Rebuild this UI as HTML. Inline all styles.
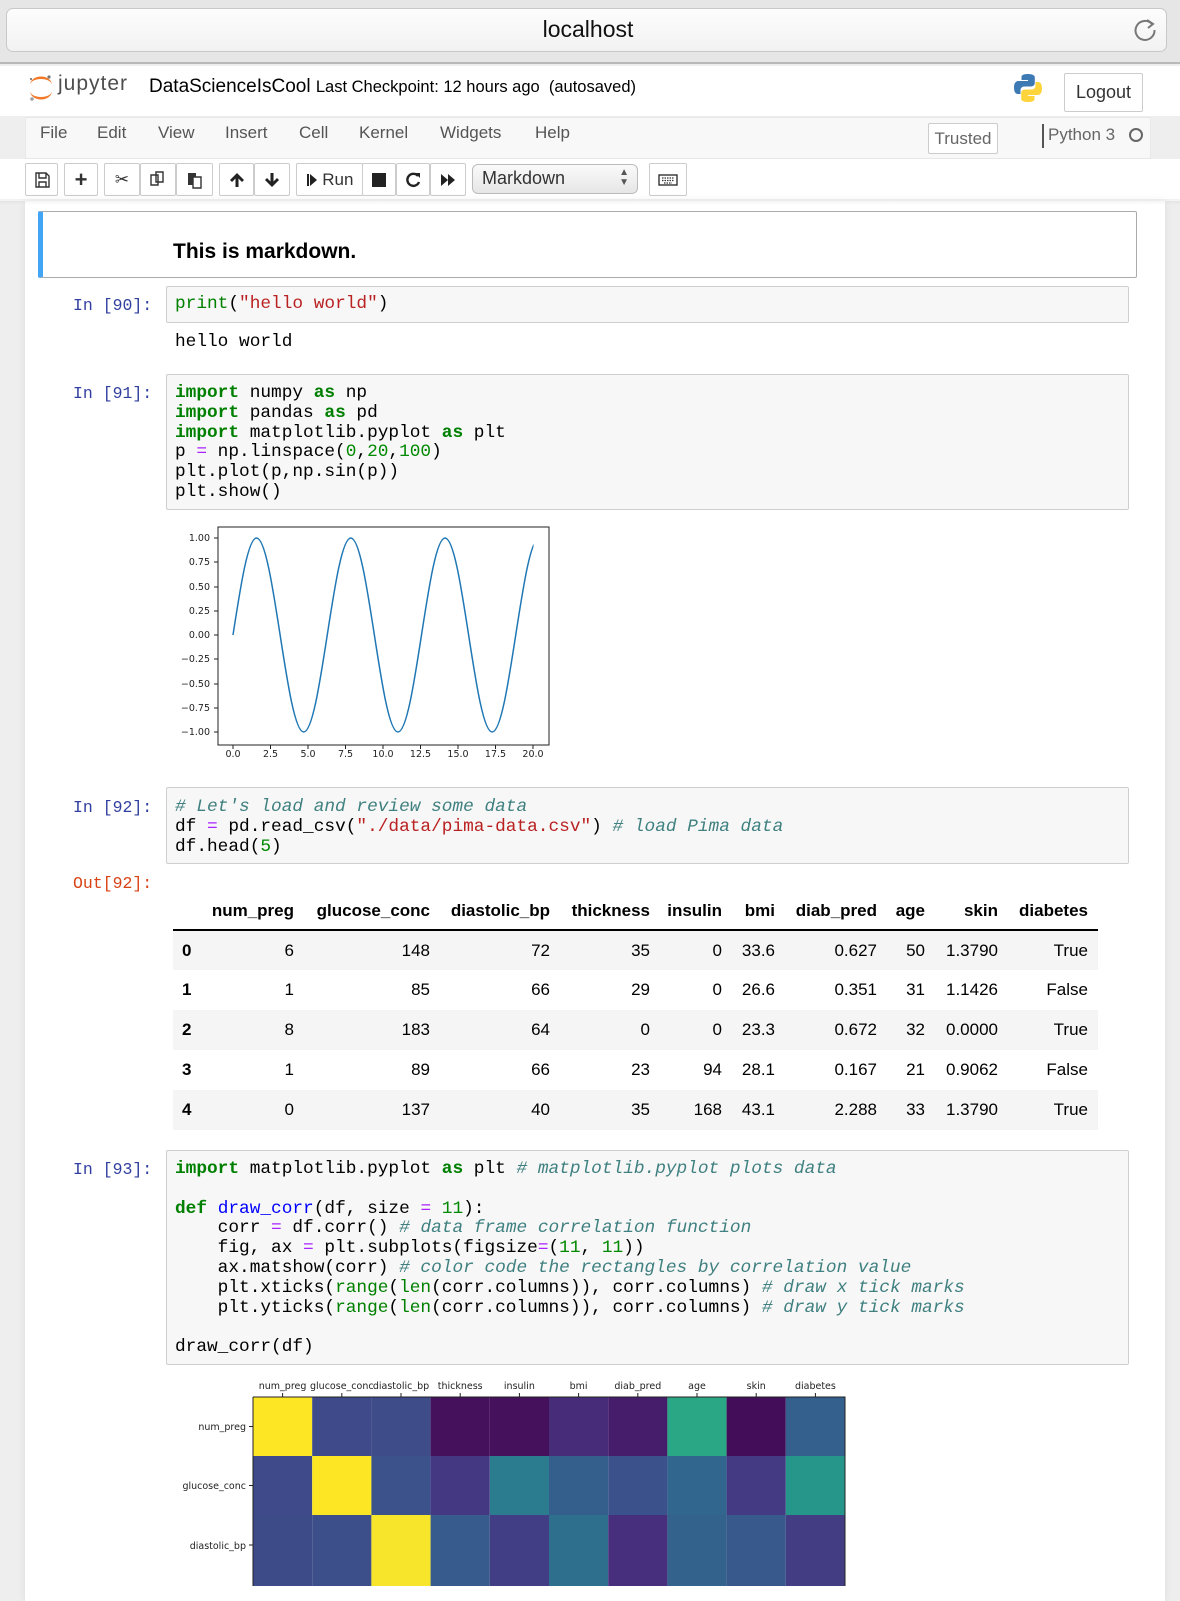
<!DOCTYPE html>
<html><head><meta charset="utf-8">
<style>
*{margin:0;padding:0;box-sizing:border-box}
body{width:1180px;height:1586px;overflow:hidden;background:#eeeeee;font-family:"Liberation Sans",Arial,sans-serif;position:relative;color:#000}
.a{position:absolute}
.mono{font-family:"Liberation Mono","DejaVu Sans Mono",monospace}
.btn{position:absolute;top:163px;height:33px;border:1px solid #ccc;border-radius:2px;background:#fff;display:flex;align-items:center;justify-content:center;font-size:17px;color:#333}
.menu span{position:absolute;top:123px;font-size:17px;color:#555}
.prompt{position:absolute;left:73px;font-size:16.5px;color:#303F9F;font-family:"Liberation Mono",monospace}
.inbox{position:absolute;left:166px;width:963px;background:#f7f7f7;border:1px solid #cfcfcf;border-radius:2px}
pre{font-family:"Liberation Mono","DejaVu Sans Mono",monospace;font-size:17.8px;line-height:19.8px;position:absolute;left:175px;color:#000;white-space:pre}
.k{color:#008000;font-weight:bold}.b{color:#008000}.s{color:#BA2121}.n{color:#008800}.o{color:#AA22FF}.c{color:#408080;font-style:italic}.f{color:#0000FF}
table{position:absolute;left:173px;top:893px;border-collapse:collapse;font-size:17px;table-layout:fixed;width:925px}
th,td{text-align:right;padding:0 10px 0 0;height:40px}
th{font-weight:bold;height:37px;vertical-align:middle}
thead tr{border-bottom:2px solid #000}
tbody tr:nth-child(odd){background:#f5f5f5}
td:first-child{text-align:left;padding-left:9px;font-weight:bold}
</style></head><body>
<div class="a" style="left:0;top:0;width:1180px;height:64px;background:#e6e6e6;border-bottom:2px solid #b9b9b9"></div>
<div class="a" style="left:6px;top:8px;width:1161px;height:44px;border-radius:7px;background:linear-gradient(#fdfdfd,#f2f2f2);border:1px solid #c8c8c8"></div>
<div class="a" style="left:0;top:16px;width:1176px;text-align:center;font-size:23px;color:#111">localhost</div>
<svg class="a" style="left:1132px;top:17px" width="26" height="26" viewBox="0 0 26 26"><path d="M20 7 A9.5 9.5 0 1 0 22.5 13" fill="none" stroke="#777" stroke-width="2"/><path d="M15 3 L21 7 L16 11" fill="none" stroke="#777" stroke-width="2"/></svg>
<div class="a" style="left:0;top:66px;width:1180px;height:50px;background:#fff"></div>
<svg class="a" style="left:26px;top:72px" width="30" height="32" viewBox="0 0 30 32"><path d="M4 13 A11 6 0 0 1 26 13 A11 8.5 0 0 0 4 13Z" fill="#F37726"/><path d="M4 19 A11 6 0 0 0 26 19 A11 8.5 0 0 1 4 19Z" fill="#F37726"/><circle cx="23" cy="5" r="1.6" fill="#767677"/><circle cx="6" cy="27" r="1.8" fill="#9e9e9e"/><circle cx="5" cy="7" r="1" fill="#616262"/></svg>
<div class="a" style="left:58px;top:72px;font-size:21px;color:#4e4e4e;letter-spacing:1px">jupyter</div>
<div class="a" style="left:149px;top:76px;font-size:19px;color:#000">DataScienceIsCool <span style="font-size:16.5px">Last Checkpoint: 12 hours ago&nbsp; (autosaved)</span></div>
<svg class="a" style="left:1013px;top:73px" width="30" height="30" viewBox="0 0 30 30"><path d="M14.5 1C8 1 8.5 4 8.5 4v3h6.5v1H5.5S1 7.5 1 14.5s4 6.5 4 6.5h2.5v-3.5s-.2-4 4-4h6.5s3.8.1 3.8-3.7V4.3S22.4 1 14.5 1z" fill="#3d7ab3"/><path d="M15.5 29c6.5 0 6-3 6-3v-3H15v-1h9.5s4.5.5 4.5-6.5-4-6.5-4-6.5h-2.5v3.5s.2 4-4 4H12s-3.8-.1-3.8 3.7v5.5S7.6 29 15.5 29z" fill="#fdd43b"/></svg>
<div class="a" style="left:1064px;top:73px;width:79px;height:39px;border:1px solid #ccc;border-radius:2px;font-size:18px;display:flex;align-items:center;justify-content:center;color:#333">Logout</div>
<div class="a" style="left:25px;top:117px;width:1126px;height:42px;background:#f8f8f8;border:1px solid #e7e7e7;border-radius:2px"></div>
<div class="menu"><span style="left:40px">File</span><span style="left:97px">Edit</span><span style="left:158px">View</span><span style="left:225px">Insert</span><span style="left:299px">Cell</span><span style="left:359px">Kernel</span><span style="left:440px">Widgets</span><span style="left:535px">Help</span></div>
<div class="a" style="left:928px;top:123px;width:70px;height:31px;border:1px solid #ccc;border-radius:2px;font-size:17px;color:#666;display:flex;align-items:center;justify-content:center;background:#fff">Trusted</div>
<div class="a" style="left:1042px;top:124px;width:2px;height:24px;background:#555"></div>
<div class="a" style="left:1048px;top:125px;font-size:17px;color:#666">Python 3</div>
<div class="a" style="left:1129px;top:128px;width:14px;height:14px;border:2px solid #666;border-radius:50%"></div>
<div class="a" style="left:0;top:159px;width:1180px;height:42px;background:#fff"></div>
<div class="btn" style="left:25px;width:33px"><svg width="16" height="16" viewBox="0 0 16 16"><path d="M2 1h10l3 3v11H2z M5 1v5h7V1 M5 10h7v5H5z" fill="none" stroke="#333" stroke-width="1.4"/></svg></div>
<div class="btn" style="left:64px;width:34px;font-weight:bold;font-size:22px">+</div>
<div class="btn" style="left:104px;width:36px">✂</div>
<div class="btn" style="left:140px;width:36px"><svg width="18" height="18" viewBox="0 0 18 18"><path d="M2 4h7v10H2z M7 1h7v10H7z" fill="#fff" stroke="#333" stroke-width="1.4"/></svg></div>
<div class="btn" style="left:176px;width:37px"><svg width="18" height="18" viewBox="0 0 18 18"><path d="M2 2h8v12H2z" fill="#333"/><path d="M7 6h8v11H7z" fill="#fff" stroke="#333" stroke-width="1.4"/></svg></div>
<div class="btn" style="left:219px;width:35px"><svg width="16" height="16" viewBox="0 0 16 16"><path d="M8 1L1 8l2 2 3.5-3.5V15h3V6.5L13 10l2-2z" fill="#222"/></svg></div>
<div class="btn" style="left:254px;width:36px"><svg width="16" height="16" viewBox="0 0 16 16"><path d="M8 15L1 8l2-2 3.5 3.5V1h3v8.5L13 6l2 2z" fill="#222"/></svg></div>
<div class="btn" style="left:296px;width:67px"><svg width="12" height="16" viewBox="0 0 12 16"><path d="M1 2h2v12H1z M4 2l7 6-7 6z" fill="#222"/></svg>&nbsp;Run</div>
<div class="btn" style="left:362px;width:34px"><div style="width:14px;height:14px;background:#222"></div></div>
<div class="btn" style="left:396px;width:34px"><svg width="16" height="16" viewBox="0 0 16 16"><path d="M13 4A6 6 0 1 0 14 10" fill="none" stroke="#222" stroke-width="2.4"/><path d="M10 1l5 0 0 5z" fill="#222"/></svg></div>
<div class="btn" style="left:430px;width:36px"><svg width="16" height="16" viewBox="0 0 16 16"><path d="M1 2l7 6-7 6z M8 2l7 6-7 6z" fill="#222"/></svg></div>
<div class="a" style="left:472px;top:164px;width:166px;height:30px;border:1px solid #bbb;border-radius:6px;background:linear-gradient(#fafafa,#e6e6e6);font-size:18px;color:#333;padding:3px 0 0 9px">Markdown<span style="position:absolute;right:8px;top:3px;font-size:10px;line-height:10px;color:#555">▲<br>▼</span></div>
<div class="btn" style="left:649px;width:38px"><svg width="20" height="12" viewBox="0 0 20 12"><rect x="1" y="1" width="18" height="10" fill="none" stroke="#333" stroke-width="1.4"/><path d="M4 4h12M4 6.5h12M6 9h8" stroke="#333" stroke-width="1.2" stroke-dasharray="1.5 1"/></svg></div>
<div class="a" style="left:25px;top:201px;width:1140px;height:1400px;background:#fff;box-shadow:0 0 8px rgba(0,0,0,0.08)"></div>
<div class="a" style="left:0;top:199px;width:1180px;height:6px;background:linear-gradient(rgba(0,0,0,0.06),rgba(0,0,0,0))"></div>
<div class="a" style="left:38px;top:211px;width:1099px;height:67px;border:1px solid #ababab;border-left:5px solid #42A5F5;border-radius:2px"></div>
<div class="a" style="left:173px;top:240px;font-size:21px;font-weight:bold">This is markdown.</div>
<div class="prompt" style="top:296px">In [90]:</div>
<div class="inbox" style="top:286px;height:37px"></div>
<pre style="top:295px"><span class="b">print</span>(<span class="s">"hello world"</span>)</pre>
<pre style="top:333px">hello world</pre>
<div class="prompt" style="top:384px">In [91]:</div>
<div class="inbox" style="top:374px;height:136px"></div>
<pre style="top:384px"><span class="k">import</span> numpy <span class="k">as</span> np
<span class="k">import</span> pandas <span class="k">as</span> pd
<span class="k">import</span> matplotlib.pyplot <span class="k">as</span> plt
p <span class="o">=</span> np.linspace(<span class="n">0</span>,<span class="n">20</span>,<span class="n">100</span>)
plt.plot(p,np.sin(p))
plt.show()</pre>
<div class="prompt" style="top:798px">In [92]:</div>
<div class="inbox" style="top:787px;height:77px"></div>
<pre style="top:798px"><span class="c"># Let's load and review some data</span>
df <span class="o">=</span> pd.read_csv(<span class="s">"./data/pima-data.csv"</span>) <span class="c"># load Pima data</span>
df.head(<span class="n">5</span>)</pre>
<div class="prompt" style="top:874px;color:#D84315">Out[92]:</div>
<table>
<colgroup><col style="width:31px"><col style="width:100px"><col style="width:136px"><col style="width:120px"><col style="width:100px"><col style="width:72px"><col style="width:53px"><col style="width:102px"><col style="width:48px"><col style="width:73px"><col style="width:90px"></colgroup>
<thead><tr><th></th><th>num_preg</th><th>glucose_conc</th><th>diastolic_bp</th><th>thickness</th><th>insulin</th><th>bmi</th><th>diab_pred</th><th>age</th><th>skin</th><th>diabetes</th></tr></thead>
<tbody>
<tr><td>0</td><td>6</td><td>148</td><td>72</td><td>35</td><td>0</td><td>33.6</td><td>0.627</td><td>50</td><td>1.3790</td><td>True</td></tr>
<tr><td>1</td><td>1</td><td>85</td><td>66</td><td>29</td><td>0</td><td>26.6</td><td>0.351</td><td>31</td><td>1.1426</td><td>False</td></tr>
<tr><td>2</td><td>8</td><td>183</td><td>64</td><td>0</td><td>0</td><td>23.3</td><td>0.672</td><td>32</td><td>0.0000</td><td>True</td></tr>
<tr><td>3</td><td>1</td><td>89</td><td>66</td><td>23</td><td>94</td><td>28.1</td><td>0.167</td><td>21</td><td>0.9062</td><td>False</td></tr>
<tr><td>4</td><td>0</td><td>137</td><td>40</td><td>35</td><td>168</td><td>43.1</td><td>2.288</td><td>33</td><td>1.3790</td><td>True</td></tr>
</tbody></table>
<div class="prompt" style="top:1160px">In [93]:</div>
<div class="inbox" style="top:1150px;height:215px"></div>
<pre style="top:1160px"><span class="k">import</span> matplotlib.pyplot <span class="k">as</span> plt <span class="c"># matplotlib.pyplot plots data</span>

<span class="k">def</span> <span class="f">draw_corr</span>(df, size <span class="o">=</span> <span class="n">11</span>):
    corr <span class="o">=</span> df.corr() <span class="c"># data frame correlation function</span>
    fig, ax <span class="o">=</span> plt.subplots(figsize<span class="o">=</span>(<span class="n">11</span>, <span class="n">11</span>))
    ax.matshow(corr) <span class="c"># color code the rectangles by correlation value</span>
    plt.xticks(<span class="b">range</span>(<span class="b">len</span>(corr.columns)), corr.columns) <span class="c"># draw x tick marks</span>
    plt.yticks(<span class="b">range</span>(<span class="b">len</span>(corr.columns)), corr.columns) <span class="c"># draw y tick marks</span>

draw_corr(df)</pre>
<svg class="a" style="left:0;top:0" width="1180" height="1586" viewBox="0 0 1180 1586" font-family="DejaVu Sans, sans-serif">
<defs><clipPath id="cp"><rect x="219" y="528" width="314.5" height="216"/></clipPath></defs>
<rect x="218" y="527" width="331" height="218" fill="#fff" stroke="#222" stroke-width="1"/>
<path clip-path="url(#cp)" fill="none" stroke="#1f77b4" stroke-width="1.5" d="M233,635 C240.68,585.3 248.03,538 256.56,538 S272.44,585.3 280.12,635 S295.16,732 303.69,732 S319.57,684.7 327.25,635 S342.28,538 350.81,538 S366.69,585.3 374.37,635 S389.4,732 397.93,732 S413.82,684.7 421.5,635 S436.53,538 445.06,538 S460.94,585.3 468.62,635 S483.65,732 492.18,732 S508.06,684.7 515.74,635 S530.78,538 539.31,538"/>
<g font-size="9.5" fill="#222" text-anchor="end">
<text x="210" y="541">1.00</text><text x="210" y="565">0.75</text><text x="210" y="590">0.50</text><text x="210" y="614">0.25</text><text x="210" y="638">0.00</text><text x="210" y="662">−0.25</text><text x="210" y="687">−0.50</text><text x="210" y="711">−0.75</text><text x="210" y="735">−1.00</text>
</g>
<g stroke="#222" stroke-width="1"><path d="M214,538h4M214,562h4M214,587h4M214,611h4M214,635h4M214,659h4M214,684h4M214,708h4M214,732h4"/><path d="M233,745v4M270.5,745v4M308,745v4M345.5,745v4M383,745v4M420.5,745v4M458,745v4M495.5,745v4M533,745v4"/></g>
<g font-size="9.5" fill="#222" text-anchor="middle">
<text x="233" y="757">0.0</text><text x="270.5" y="757">2.5</text><text x="308" y="757">5.0</text><text x="345.5" y="757">7.5</text><text x="383" y="757">10.0</text><text x="420.5" y="757">12.5</text><text x="458" y="757">15.0</text><text x="495.5" y="757">17.5</text><text x="533" y="757">20.0</text>
</g>
<g>
<rect x="253" y="1397" width="59.2" height="59" fill="#fde725"/><rect x="312.2" y="1397" width="59.2" height="59" fill="#3e4a89"/><rect x="371.4" y="1397" width="59.2" height="59" fill="#3e4c8a"/><rect x="430.6" y="1397" width="59.2" height="59" fill="#45105c"/><rect x="489.8" y="1397" width="59.2" height="59" fill="#45105c"/><rect x="549" y="1397" width="59.2" height="59" fill="#472c7a"/><rect x="608.2" y="1397" width="59.2" height="59" fill="#461d6b"/><rect x="667.4" y="1397" width="59.2" height="59" fill="#2aa785"/><rect x="726.6" y="1397" width="59.2" height="59" fill="#440d5a"/><rect x="785.8" y="1397" width="59.2" height="59" fill="#33608d"/>
<rect x="253" y="1456" width="59.2" height="59" fill="#3e4a89"/><rect x="312.2" y="1456" width="59.2" height="59" fill="#fde725"/><rect x="371.4" y="1456" width="59.2" height="59" fill="#3b528b"/><rect x="430.6" y="1456" width="59.2" height="59" fill="#453882"/><rect x="489.8" y="1456" width="59.2" height="59" fill="#2b7c8e"/><rect x="549" y="1456" width="59.2" height="59" fill="#345f8d"/><rect x="608.2" y="1456" width="59.2" height="59" fill="#3b518b"/><rect x="667.4" y="1456" width="59.2" height="59" fill="#31668e"/><rect x="726.6" y="1456" width="59.2" height="59" fill="#443a83"/><rect x="785.8" y="1456" width="59.2" height="59" fill="#26968b"/>
<rect x="253" y="1515" width="59.2" height="71" fill="#3d4c89"/><rect x="312.2" y="1515" width="59.2" height="71" fill="#3c4f8a"/><rect x="371.4" y="1515" width="59.2" height="71" fill="#f6e52a"/><rect x="430.6" y="1515" width="59.2" height="71" fill="#375b8d"/><rect x="489.8" y="1515" width="59.2" height="71" fill="#423e85"/><rect x="549" y="1515" width="59.2" height="71" fill="#2e6f8e"/><rect x="608.2" y="1515" width="59.2" height="71" fill="#472f7d"/><rect x="667.4" y="1515" width="59.2" height="71" fill="#33628d"/><rect x="726.6" y="1515" width="59.2" height="71" fill="#38598c"/><rect x="785.8" y="1515" width="59.2" height="71" fill="#433d84"/>
<path d="M253,1397H845V1586M253,1397V1586" fill="none" stroke="#222" stroke-width="1"/>
</g>
<g stroke="#222"><path d="M282.6,1393v4M341.8,1393v4M401,1393v4M460.2,1393v4M519.4,1393v4M578.6,1393v4M637.8,1393v4M697,1393v4M756.2,1393v4M815.4,1393v4M249,1426.5h4M249,1485.5h4M249,1545h4"/></g>
<g font-size="9.5" fill="#222" text-anchor="middle">
<text x="282.6" y="1389">num_preg</text><text x="341.8" y="1389">glucose_conc</text><text x="401" y="1389">diastolic_bp</text><text x="460.2" y="1389">thickness</text><text x="519.4" y="1389">insulin</text><text x="578.6" y="1389">bmi</text><text x="637.8" y="1389">diab_pred</text><text x="697" y="1389">age</text><text x="756.2" y="1389">skin</text><text x="815.4" y="1389">diabetes</text>
</g>
<g font-size="9.5" fill="#222" text-anchor="end"><text x="246" y="1430">num_preg</text><text x="246" y="1489">glucose_conc</text><text x="246" y="1549">diastolic_bp</text></g>
</svg>
</body></html>
